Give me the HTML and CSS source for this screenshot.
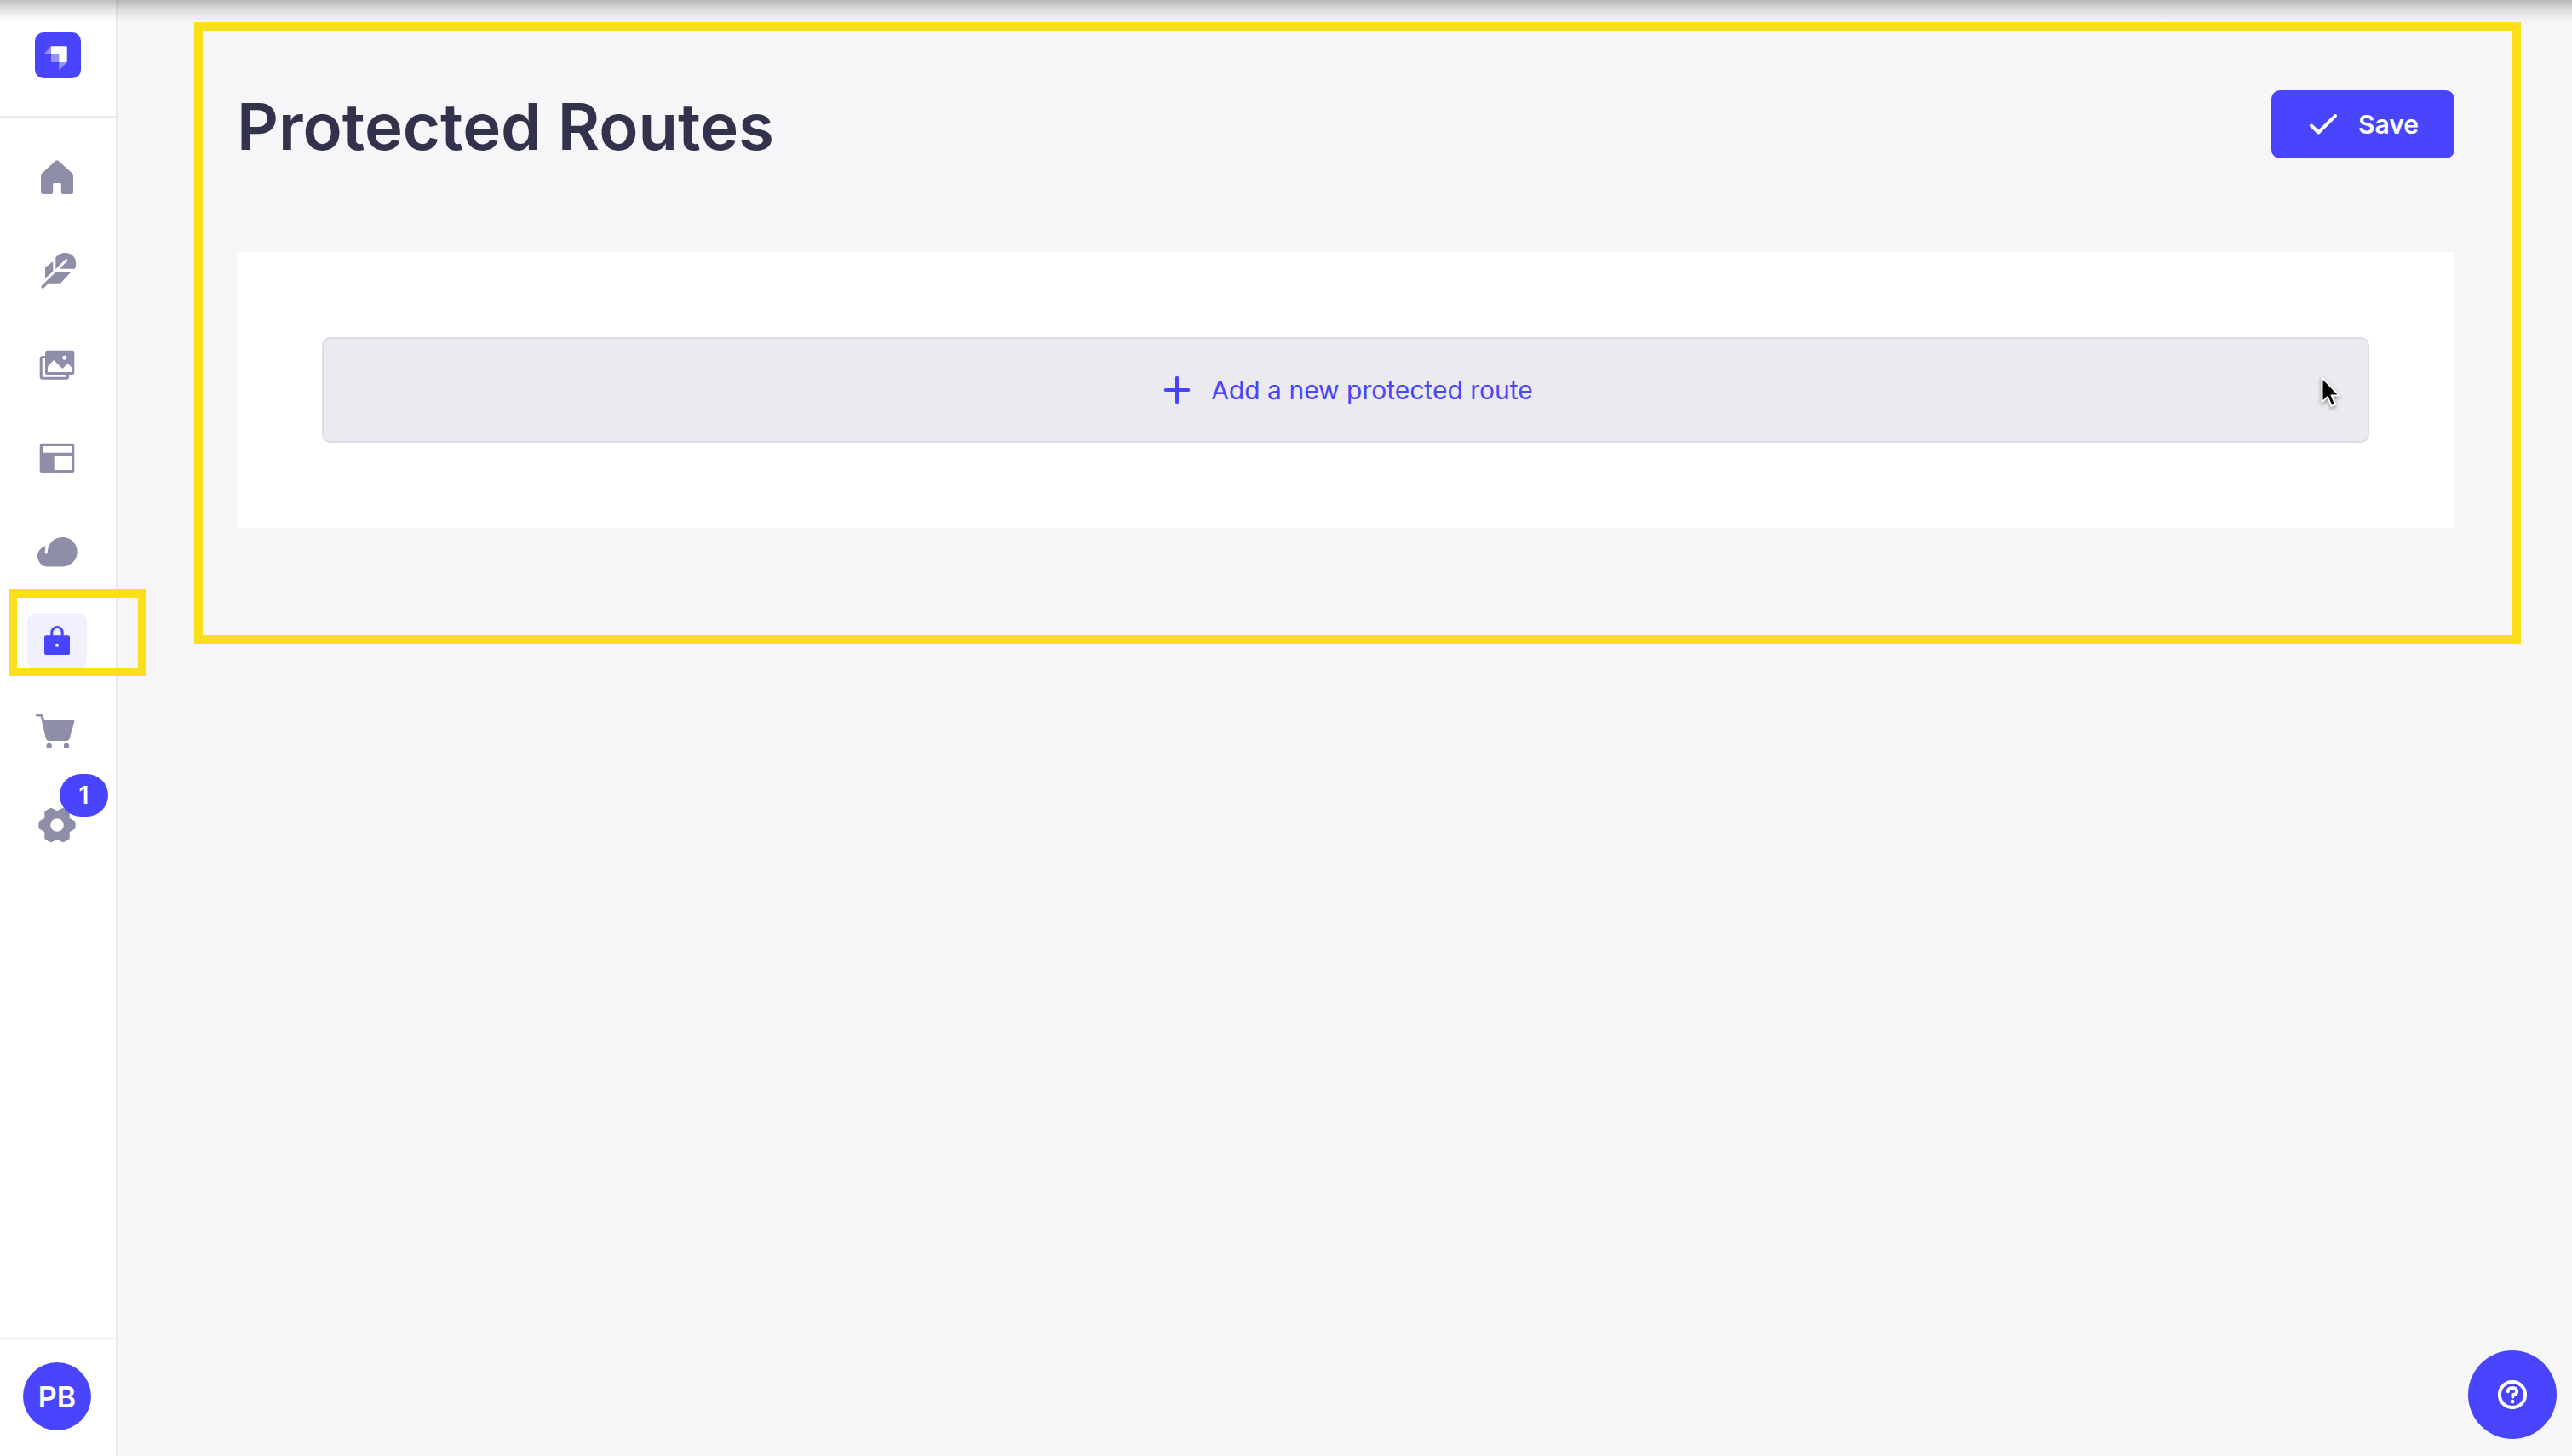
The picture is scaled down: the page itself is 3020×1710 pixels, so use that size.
FILE: index.html
```html
<!DOCTYPE html>
<html lang="en">
<head>
<meta charset="utf-8">
<meta name="viewport" content="width=device-width, initial-scale=1">
<title>Protected Routes</title>
<link rel="stylesheet" href="styles.css">
</head>
<body>
<div class="app">
  <aside class="sidebar">
    <a class="brand" href="#" aria-label="Dashboard">
      <svg class="brand-logo" viewBox="0 0 54 54" aria-hidden="true">
        <rect width="54" height="54" rx="10" fill="#4945ff"/>
        <path d="M19 16.3V26H10zM19 26h9.3v9H19zM28.3 35h9.4l-9.4 9.7z" fill="#9593ff"/>
        <path d="M19 16.3h18.2q.5 0 .5.5V35h-9.4v-8.5q0-.5-.5-.5H19z" fill="#fff"/>
      </svg>
    </a>
    <nav class="nav" aria-label="Main">
      <a class="nav-link" href="#" aria-label="Home">
        <svg class="nav-icon" viewBox="-26 -26 52 52" aria-hidden="true"><path d="M-2-18.8Q0-20.5 2-18.8L18-4.3Q19-3.3 19-2V17.5Q19 20 16.5 20H7.3Q4.8 20 4.8 17.5V8.3Q4.8 7 3.5 7H-3.5Q-4.8 7-4.8 8.3V17.5Q-4.8 20-7.3 20H-16.5Q-19 20-19 17.5V-2Q-19-3.3-18-4.3Z"/></svg>
      </a>
      <a class="nav-link" href="#" aria-label="Content Manager">
        <svg class="nav-icon" viewBox="-26 -26 52 52" aria-hidden="true">
          <path d="M-1.7-15.5C2-19.5 5-21 10-21C17-21 22.2-16 22.2-9C22.2-6 22-4 20.8-2.3H-1.7ZM-4.7-11V.7L-14 9V-3.7ZM-1 1H16.7L4 14.7H-10L-15.6 20.3A1.9 1.9 0 0 1-18.3 17.7Z"/>
          <path class="cut-line" d="M10.7-12.2L-1 -.5"/>
        </svg>
      </a>
      <a class="nav-link" href="#" aria-label="Media Library">
        <svg class="nav-icon" viewBox="-26 -26 52 52" aria-hidden="true">
          <rect x="-14" y="-16.3" width="34.3" height="28.3" rx="2.5"/>
          <path class="cut" d="M-11 2.7L-4-5L6.3 5L12.7-1L17.7 4V9H-11Z"/>
          <circle class="cut" cx="8.7" cy="-7.7" r="2.5"/>
          <path class="line" d="M-14-8.5H-17Q-18.8-8.5-18.8-6.7V14.5Q-18.8 16.3-17 16.3H10.7Q12.5 16.3 12.5 14.5V12"/>
        </svg>
      </a>
      <a class="nav-link" href="#" aria-label="Content-Type Builder">
        <svg class="nav-icon" viewBox="-26 -26 52 52" aria-hidden="true">
          <rect x="-20.3" y="-17.3" width="40.6" height="34.6" rx="3"/>
          <path class="cut" d="M-17-14H17V-6.3H-17ZM-3.3-3H17V14H-3.3Z"/>
        </svg>
      </a>
      <a class="nav-link" href="#" aria-label="Deploy">
        <svg class="nav-icon" viewBox="-26 -26 52 52" aria-hidden="true"><path d="M-13-6.8C-14-4-14.2-2-14.2 1A1.5 1.5 0 0 0-11.2 1C-11-10-3.5-17 6.5-17A17.2 17.2 0 0 1 6.5 17.4H-11.5A12.2 12.2 0 0 1-13-6.8Z"/></svg>
      </a>
      <a class="nav-link nav-link-active" href="#" aria-label="Protected Routes" aria-current="page">
        <svg class="nav-icon" viewBox="-26 -25 52 52" aria-hidden="true">
          <rect x="-15" y="-5.7" width="30" height="22.7" rx="2"/>
          <path class="line" d="M-6.2-5V-9.3A6.2 6.2 0 0 1 6.2-9.3V-5"/>
          <circle class="cut" cx="0" cy="5.7" r="2"/>
        </svg>
      </a>
      <a class="nav-link" href="#" aria-label="Marketplace">
        <svg class="nav-icon" viewBox="-26 -26 52 52" aria-hidden="true">
          <path class="line" d="M-23.5-18H-19.6Q-18.2-18-17.8-16.7L-15.5-9"/>
          <path d="M-17-12H19.3Q20.7-12 20.3-10.6L14.8 9Q14 12 11 12H-9.5Q-12.4 12-13.2 9L-18-12Z"/>
          <circle cx="-9.3" cy="18" r="3.2"/><circle cx="11" cy="18" r="3.2"/>
        </svg>
      </a>
      <a class="nav-link" href="#" aria-label="Settings">
        <svg class="nav-icon" viewBox="-26 -26 52 52" aria-hidden="true"><path fill-rule="evenodd" d="M0-15.7L6.7-19.3Q11-18 14.7-14.7V-7.2L21.3-3.2Q22.2 1 21.3 5.2L14.7 9.2V16.9Q11 20 6.7 21.3L0 17.7L-6.7 21.3Q-11 20-14.7 16.9V9.2L-21.3 5.2Q-22.2 1-21.3-3.2L-14.7-7.2V-14.7Q-11-18-6.7-19.3ZM-7.8 1A7.8 7.8 0 1 0 7.8 1A7.8 7.8 0 1 0-7.8 1Z"/></svg>
        <span class="badge">1</span>
      </a>
    </nav>
    <div class="account">
      <button class="avatar" type="button" aria-label="Account menu">PB</button>
    </div>
  </aside>

  <main class="main">
    <section class="panel">
      <header class="page-header">
        <h1 class="page-title">Protected Routes</h1>
        <button class="save-button" type="button">
          <svg class="save-icon" viewBox="0 0 34 26" aria-hidden="true"><path d="M3 14.5L11.3 22.5L31 3"/></svg>
          Save
        </button>
      </header>
      <div class="card">
        <button class="add-button" type="button">
          <svg class="add-icon" viewBox="0 0 32 32" aria-hidden="true"><path d="M16 1.7V30.3M2.7 16H29.3"/></svg>
          Add a new protected route
          <svg class="pointer" viewBox="0 0 30 42" aria-hidden="true"><path d="M2.5 2.5V31.2L9 25.2L13.6 35.9L18.2 34L13.8 23.4H22.6Z"/></svg>
        </button>
      </div>
    </section>
  </main>
</div>
<button class="help-button" type="button" aria-label="Help">
  <svg class="help-icon" viewBox="0 0 34 34" aria-hidden="true">
    <circle class="help-stroke" cx="17" cy="17" r="15.1"/>
    <path class="help-stroke help-mark" d="M11.8 13.2C12 10.4 14 9 17 9C20 9 22.1 10.7 22.1 13.2C22.1 15.8 20 17 17.4 17.5V19.5"/>
    <circle cx="17" cy="25.2" r="2.4" fill="#fff"/>
  </svg>
</button>
</body>
</html>
```
FILE: styles.css
```css
:root {
  --primary: #4945ff;
  --neutral: #8e8ea9;
  --border: #eaeaef;
  --highlight: #fbdf1a;
}

*,
*::before,
*::after {
  box-sizing: border-box;
}

body {
  margin: 0;
  background: #f6f6f9;
  color: #32324d;
  font-family: Inter, "Liberation Sans", sans-serif;
}

/* Shadow cast by the window bar on the page's top edge */
body::before {
  content: "";
  position: absolute;
  top: 0;
  left: 0;
  right: 0;
  height: 26px;
  background: linear-gradient(rgba(0, 0, 0, 0.25), rgba(0, 0, 0, 0.09) 50%, rgba(0, 0, 0, 0));
  pointer-events: none;
  z-index: 3;
}

button {
  border: 0;
  padding: 0;
  font-family: inherit;
  cursor: pointer;
}

.app {
  display: flex;
  min-height: 100vh;
}

.sidebar {
  display: flex;
  flex-direction: column;
  flex: none;
  width: 138px;
  background: #fff;
  border-right: 2px solid var(--border);
}

.brand {
  display: flex;
  justify-content: center;
  padding: 38px 0 44px;
  border-bottom: 3px solid var(--border);
}

.brand-logo {
  width: 54px;
  height: 54px;
}

.nav {
  display: flex;
  flex-direction: column;
  flex: 1;
  gap: 34px;
  padding: 31px 32px;
}

.nav-link {
  position: relative;
  display: flex;
  align-items: center;
  justify-content: center;
  width: 70px;
  height: 76px;
  border-radius: 10px;
  color: var(--neutral);
}

.nav-link-active {
  height: 66px;
  background: #f0f0ff;
  color: var(--primary);
}

.nav-link-active::after {
  content: "";
  position: absolute;
  top: -28px;
  left: -22px;
  width: 162px;
  height: 102px;
  border: 10px solid var(--highlight);
  pointer-events: none;
  z-index: 1;
}

.nav-icon {
  width: 52px;
  height: 52px;
  fill: currentColor;
}

.nav-icon .cut {
  fill: #fff;
}

.nav-icon .cut-line {
  fill: none;
  stroke: #fff;
  stroke-width: 3;
  stroke-linecap: round;
}

.nav-icon .line {
  fill: none;
  stroke: currentColor;
  stroke-width: 3;
  stroke-linecap: round;
}

.badge {
  position: absolute;
  top: -21px;
  left: 38px;
  width: 57px;
  height: 50px;
  border-radius: 25px;
  background: var(--primary);
  color: #fff;
  font-size: 28px;
  font-weight: 600;
  line-height: 50px;
  text-align: center;
}

.account {
  display: flex;
  justify-content: center;
  padding: 27px 2px 30px 0;
  border-top: 2px solid var(--border);
}

.avatar {
  width: 80px;
  height: 80px;
  border-radius: 50%;
  background: var(--primary);
  color: #fff;
  font-size: 34px;
  font-weight: 600;
}

.main {
  flex: 1;
  min-width: 0;
  padding: 26px 60px 60px 90px;
}

.panel {
  padding: 70px 68px 126px 40px;
  border: 10px solid var(--highlight);
}

.page-header {
  display: flex;
  align-items: center;
  justify-content: space-between;
  height: 80px;
  margin-bottom: 110px;
}

.page-title {
  margin: 0;
  padding-top: 4px;
  font-size: 76px;
  font-weight: 600;
  line-height: 80px;
}

.save-button {
  display: flex;
  align-items: center;
  gap: 24px;
  height: 80px;
  padding: 0 42px 0 44px;
  border-radius: 10px;
  background: var(--primary);
  color: #fff;
  font-size: 30px;
  font-weight: 600;
}

.save-icon {
  width: 34px;
  height: 26px;
  fill: none;
  stroke: #fff;
  stroke-width: 4;
  stroke-linecap: round;
  stroke-linejoin: round;
}

.card {
  padding: 100px;
  background: #fff;
}

.add-button {
  position: relative;
  display: flex;
  align-items: center;
  justify-content: center;
  gap: 24px;
  width: 100%;
  height: 124px;
  padding-left: 6px;
  border: 2px solid #dcdce4;
  border-radius: 10px;
  background: #eaeaef;
  color: var(--primary);
  font-size: 30px;
}

.add-icon {
  width: 32px;
  height: 32px;
  fill: none;
  stroke: currentColor;
  stroke-width: 4;
  stroke-linecap: round;
}

.pointer {
  position: absolute;
  top: 43px;
  right: 26px;
  width: 30px;
  height: 42px;
  fill: #000;
  stroke: #fff;
  stroke-width: 2;
  filter: drop-shadow(0 2px 2px rgba(0, 0, 0, 0.4));
}

.help-button {
  position: fixed;
  right: 18px;
  bottom: 20px;
  display: flex;
  align-items: center;
  justify-content: center;
  width: 104px;
  height: 104px;
  border-radius: 50%;
  background: var(--primary);
}

.help-icon {
  width: 34px;
  height: 34px;
}

.help-stroke {
  fill: none;
  stroke: #fff;
  stroke-width: 4;
}

.help-mark {
  stroke-linecap: round;
}
```
